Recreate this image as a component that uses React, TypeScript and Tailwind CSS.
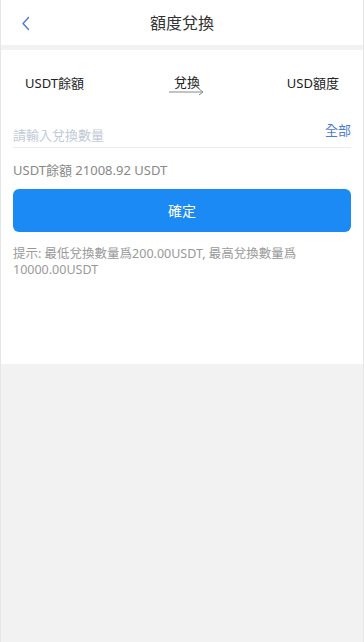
export default function App() {
  return (
    <div
      className="h-[642px] w-full bg-[#f2f2f2] border-x border-[#e6e6e6] flex flex-col"
      style={{ fontFamily: '"Noto Sans", "Noto Sans CJK TC", sans-serif' }}
    >
      <div className="h-[45px] bg-white relative flex items-center justify-center shrink-0">
        <button className="absolute left-[20px] top-[16px]">
          <svg width="10" height="15" viewBox="0 0 10 15">
            <polyline points="7.5,1.5 2,7.5 7.5,13.5" fill="none" stroke="#4a7bd8" strokeWidth="1.4" strokeLinecap="round" strokeLinejoin="round" />
          </svg>
        </button>
        <h1 className="text-[16px] text-[#333] leading-none">額度兌換</h1>
      </div>
      <div className="h-[5px] shrink-0" />

      <div className="bg-white h-[314px] shrink-0 flex flex-col">
        <div className="grid grid-cols-3 items-center px-[24px] h-[68px] text-[13px] text-[#222]">
          <span>USDT餘額</span>
          <div className="flex flex-col items-center mt-[2px] ml-[10px]">
            <span className="leading-[14px]">兌換</span>
            <svg width="36" height="8" viewBox="0 0 36 8" className="-mt-[1px]">
              <line x1="0" y1="4" x2="34" y2="4" stroke="#888" strokeWidth="1" />
              <polyline points="30,1 34,4 30,7" fill="none" stroke="#888" strokeWidth="1" />
            </svg>
          </div>
          <span className="text-right">USD額度</span>
        </div>

        <div className="mx-[12px] flex items-end justify-between border-b border-[#ececec] h-[30px] pb-[3px]">
          <span className="text-[13px] text-[#c3cad8] leading-[18px]">請輸入兌換數量</span>
          <span className="text-[13px] text-[#4a7bd8] leading-[18px] mb-[5px]">全部</span>
        </div>

        <div className="mx-[12px] mt-[13px] text-[13px] text-[#888] leading-[18px]">USDT餘額 21008.92 USDT</div>

        <button className="mx-[12px] mt-[10px] h-[43px] rounded-[6px] bg-[#1c8af5] text-white text-[14px]">確定</button>

        <p className="mx-[12px] mt-[14px] text-[12.5px] text-[#999] leading-[16px]">
          提示: 最低兌換數量爲200.00USDT, 最高兌換數量爲
          <br />
          10000.00USDT
        </p>
      </div>
    </div>
  )
}
